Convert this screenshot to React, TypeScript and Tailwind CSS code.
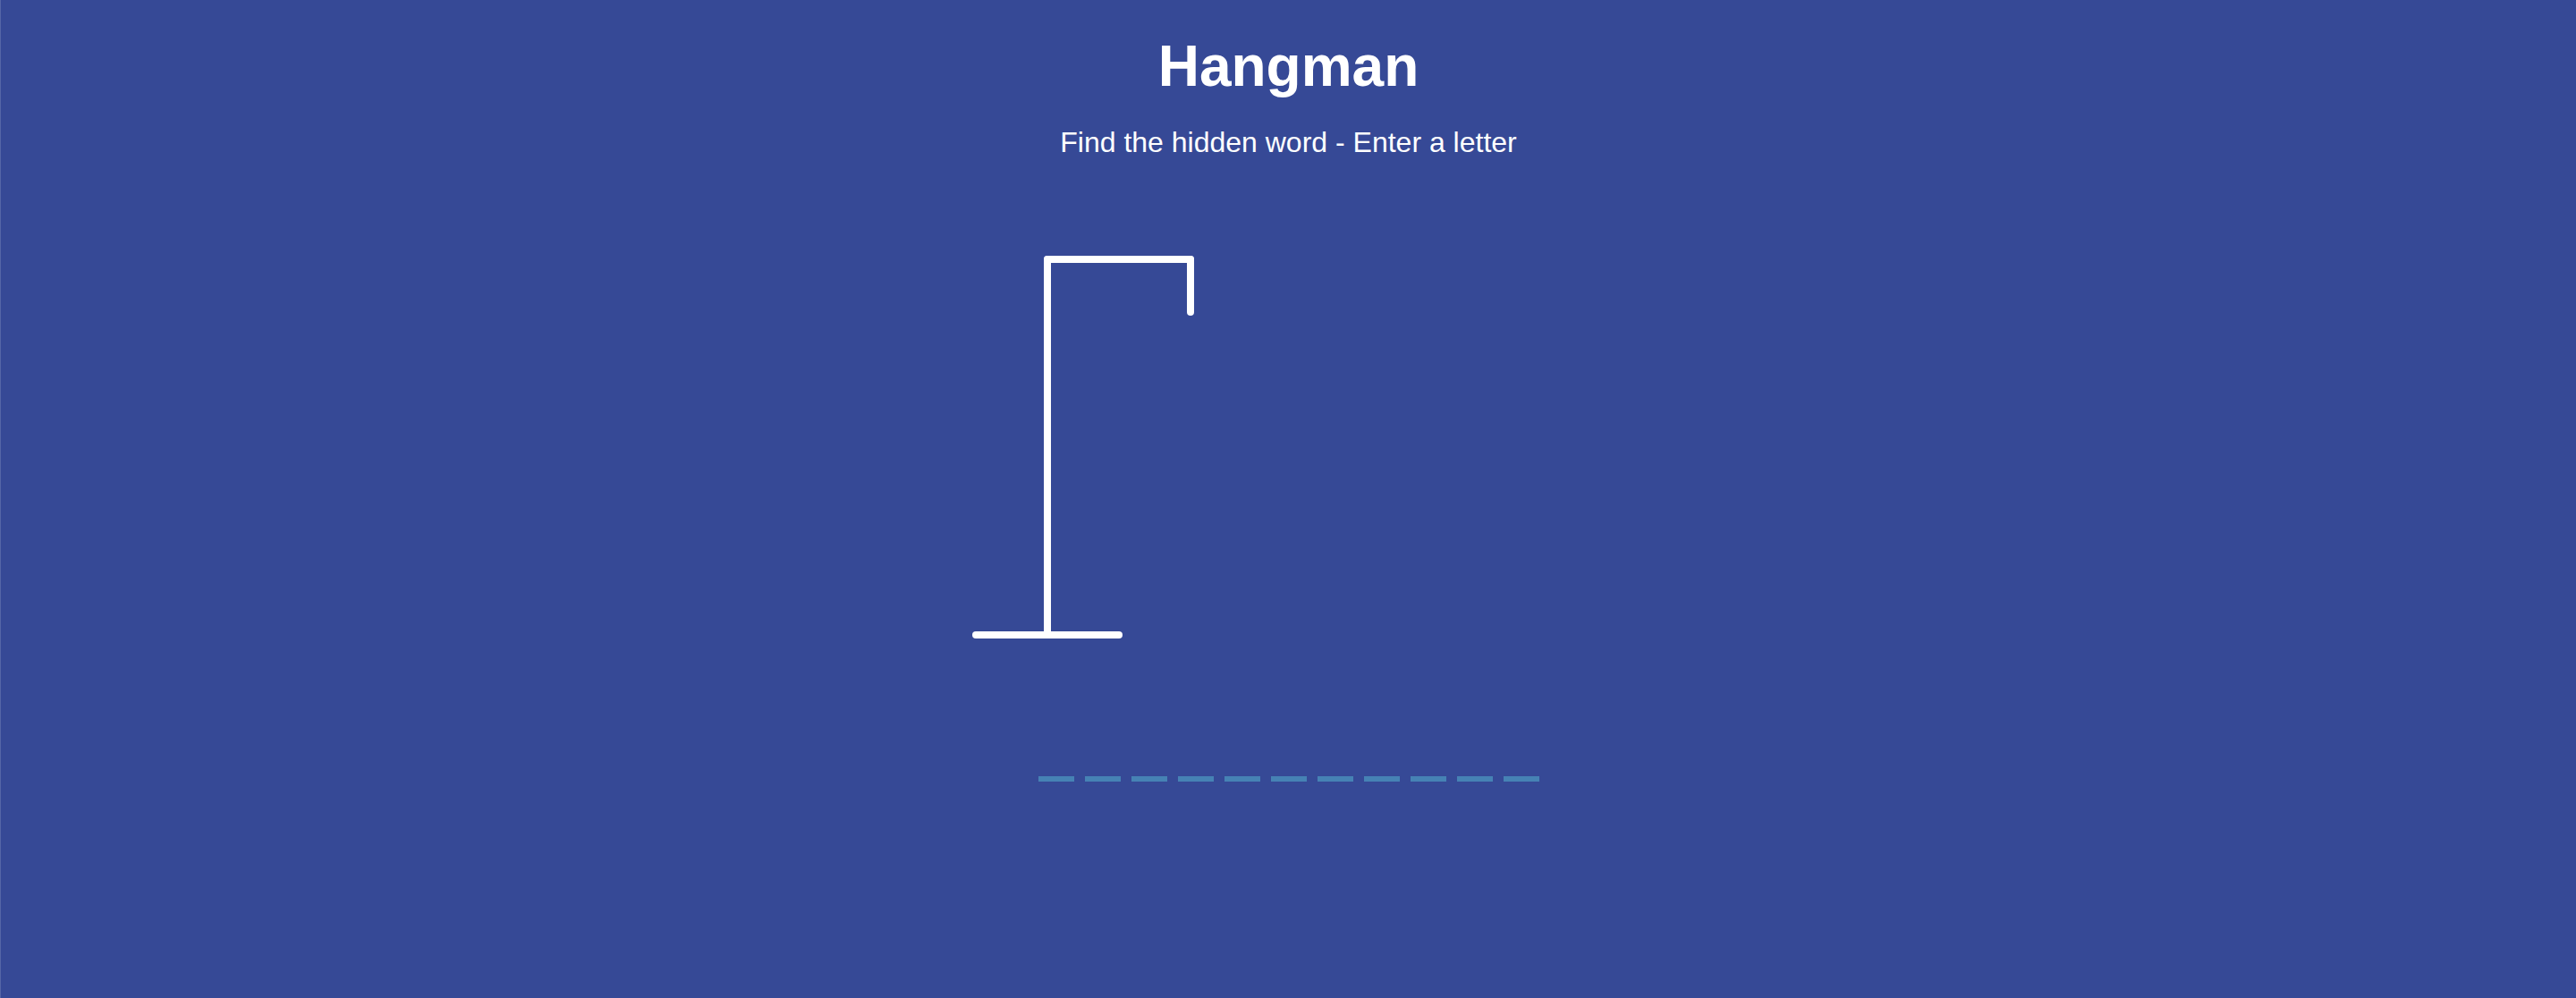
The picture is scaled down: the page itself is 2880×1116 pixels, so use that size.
const word = 'xxxxxxxxxxx'.split('');

function Gallows() {
  return (
    <svg width="400" height="500" viewBox="0 0 400 500" fill="none" stroke="#ffffff" strokeWidth="8" strokeLinecap="round">
      {/* rod */}
      <line x1="130" y1="40" x2="290" y2="40" />
      <line x1="290" y1="40" x2="290" y2="99" />
      <line x1="130" y1="40" x2="130" y2="460" />
      <line x1="50" y1="460" x2="210" y2="460" />
    </svg>
  );
}

export default function App() {
  return (
    <div className="min-h-screen bg-[#364996] border-l border-[#5566a6] text-white font-['Liberation_Sans',Arial,sans-serif]">
      <h1 className="pt-[37px] text-center text-[64px] font-bold leading-[74px]">Hangman</h1>
      <p className="mt-[30px] text-center text-[32px] leading-[37px]">Find the hidden word - Enter a letter</p>
      <div className="mt-[72px] flex justify-center">
        <div className="flex w-[800px]">
          <Gallows />
          <div className="w-[400px]" />
        </div>
      </div>
      <div className="mt-[118px] flex justify-center">
        {word.map((_, i) => (
          <span key={i} className="mx-[6px] h-[6px] w-[40px] bg-[#4682b4]" />
        ))}
      </div>
    </div>
  );
}
